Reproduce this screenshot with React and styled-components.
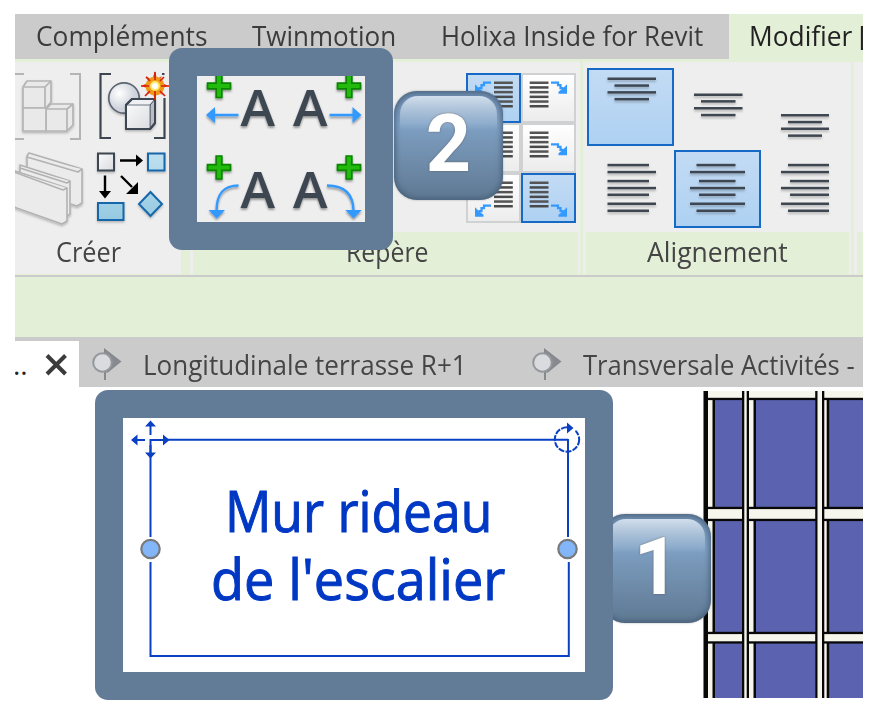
import React, { useLayoutEffect, useRef, useState } from 'react';
import styled, { createGlobalStyle, css } from 'styled-components';

const GlobalStyle = createGlobalStyle`
  * { box-sizing: border-box; }
  body { margin: 0; background: #fff; font-family: 'Open Sans', 'Noto Sans', sans-serif; }
  svg { display: block; }
`;

const slate = '#627b97';
const green = '#e4efd7';
const gray = '#cbcbcb';
const panel = '#eee';
const ink = '#3e4651';
const blue = '#0a40c4';
const sky = '#3399ff';

const Page = styled.div`
  width: 884px; height: 716px; padding: 14px 21px 18px 15px;
  position: relative; overflow: hidden; background: #fff;
`;
const Window = styled.div`
  width: 848px; height: 684px; overflow: hidden; display: flex; flex-direction: column;
`;
const TabBar = styled.nav`
  display: flex; height: 46px; flex: none; background: ${gray}; border-bottom: 1px solid ${green};
`;
const Tab = styled.div`
  flex: none; height: 46px; padding-left: ${p => p.$lead}px;
  line-height: 42px; font-size: 28px; color: ${p => (p.$active ? '#222' : '#3c3c3c')};
  display: flex; overflow: hidden; white-space: pre;
  ${p => p.$active && css`background: ${green}; flex: 1; margin-left: 25.5px;`}
`;
const Fit = styled.span`
  display: block; flex: none; width: ${p => p.$w}px; white-space: pre;
`;
const FitInner = styled.span`
  display: inline-block; transform-origin: 0 50%;
`;
const Ribbon = styled.div`
  display: flex; flex: none; height: 217px; background: ${green}; padding-top: 1.5px;
  border-bottom: 2px solid ${gray};
`;
const Panel = styled.section`
  flex: none; width: ${p => p.$w}px; margin-right: ${p => p.$gap}px; height: 212px;
  display: flex; flex-direction: column; background: ${panel};
`;
const PanelBody = styled.div`
  height: 170.5px; flex: none; display: flex; padding: ${p => p.$pad || '0'};
`;
const PanelLabel = styled.div`
  height: 41.5px; margin: 0 2.5px; padding-left: ${p => p.$lead}px;
  line-height: 39px; font-size: 28px; color: #454545;
  background: ${p => (p.$plain ? panel : green)};
`;
const OptionsBar = styled.div`
  height: 60px; flex: none; background: ${green};
`;
const DocTabs = styled.div`
  height: 50px; flex: none; display: flex; padding-top: 4px; background: ${gray};
  line-height: 46px; font-size: 28px; color: #454545;
`;
const OpenDoc = styled.div`
  width: 64px; flex: none; background: #fff; display: flex; overflow: hidden;
`;
const Dots = styled.span`
  width: 29px; margin-left: -2px; flex: none; color: #222;
`;
const DocTab = styled.div`
  display: flex; flex: none; width: ${p => p.$w}px; padding-left: ${p => p.$lead}px;
`;
const DocIcon = styled.svg`
  width: 51px; height: 46px; flex: none;
`;
const Canvas = styled.main`
  flex: 1; display: flex; justify-content: flex-end; background: #fff; padding-top: 4px;
`;
const ListGrid = styled.div`
  display: grid; grid-template-columns: 55px 55px; grid-template-rows: repeat(3, 50px);
`;
const ListButton = styled.div`
  border: 2px solid ${p => (p.$on ? '#1769c6' : '#d0d1d3')};
  background: ${p => (p.$on ? 'linear-gradient(#c3dbf4, #aed1f2)' : 'linear-gradient(#fff, #ececec)')};
  svg { margin: -2px; }
`;
const AlignGrid = styled.div`
  display: grid; grid-template-columns: repeat(3, 87px); grid-template-rows: 78px 78px; row-gap: 4px;
`;
const AlignButton = styled.div`
  border: 2px solid ${p => (p.$on ? '#1769c6' : 'transparent')};
  background: ${p => (p.$on ? 'linear-gradient(#c3dbf4, #aed1f2)' : 'none')};
  svg { margin: -2px; filter: drop-shadow(0 2px 1px rgba(0, 0, 0, 0.22)); }
`;
const Highlight = styled.div`
  position: absolute; left: ${p => p.$x}px; top: ${p => p.$y}px;
  width: ${p => p.$w}px; height: ${p => p.$h}px; padding: 28px;
  border-radius: 13px; background: ${slate};
`;
const HighlightView = styled.div`
  position: relative; height: 100%; background: ${p => p.$bg}; overflow: hidden;
`;
const Badge = styled.div`
  position: absolute; left: ${p => p.$x}px; top: ${p => p.$y}px; width: 109px; height: 109px;
  border-radius: 23px; overflow: hidden;
  background: linear-gradient(#6d8cae 0%, #7fa1c6 30%, #7897b8 45%, #5e7892 100%);
  box-shadow: inset 0 0 5px 2px rgba(65, 88, 114, 0.75), 0 0 2px rgba(80, 80, 80, 0.5);
  display: flex; justify-content: center;
  color: #fff; font: 700 79px/106px Roboto, 'Liberation Sans', sans-serif;
  text-shadow: 0 0 2px rgba(80, 70, 60, 0.7);
  &::before {
    content: ''; position: absolute; left: 6px; right: 6px; top: 5px; height: 34px;
    border-radius: 18px 18px 0 0;
    background: linear-gradient(rgba(220, 232, 243, 0.9), rgba(127, 161, 198, 0));
  }
`;
const Digit = styled.span`
  position: relative;
`;
const TagText = styled.div`
  position: absolute; inset: 58px 0 0 0; color: #0038c4; font-size: 56px; line-height: 68px;
  -webkit-text-stroke: 1px #0038c4;
`;
const TagLine = styled.div`
  padding-left: ${p => p.$lead}px;
`;

function FitText({ width, children }) {
  const ref = useRef(null);
  const [scale, setScale] = useState(1);
  useLayoutEffect(() => {
    setScale(width / ref.current.offsetWidth);
  }, [width]);
  return (
    <Fit $w={width}>
      <FitInner ref={ref} style={{ transform: `scaleX(${scale})` }}>{children}</FitInner>
    </Fit>
  );
}

function CreateIcons() {
  return (
    <svg width="154" height="170" viewBox="15 62 154 170" fill="none">
      <defs>
        <linearGradient id="pale" x1="0" y1="0" x2="1" y2="1"><stop stopColor="#fafafa" /><stop offset="1" stopColor="#d9dce0" /></linearGradient>
        <linearGradient id="aqua" x1="0" y1="0" x2="0" y2="1"><stop stopColor="#bfe0ee" /><stop offset="1" stopColor="#96cae2" /></linearGradient>
        <radialGradient id="ball" cx=".35" cy=".35"><stop stopColor="#fff" /><stop offset="1" stopColor="#cfd4dc" /></radialGradient>
        <filter id="soft" x="-20%" y="-20%" width="140%" height="150%"><feDropShadow dx="0" dy="1.5" stdDeviation="1" floodOpacity=".25" /></filter>
      </defs>
      <g stroke="#b4b4b4" strokeWidth="1.7" fill="#e9e9e9">
        <path d="M15 74h9M70 74h10v65H70M15 139h9" fill="none" strokeWidth="2" />
        <g filter="url(#soft)" strokeLinejoin="round">
          <path d="M23 87l4-6h24v21l-5 6H23z" /><path d="M23 87h22v21M45 87l6-6" />
          <path d="M46 109l5-5h22v21l-6 6H46z" /><path d="M46 109h21v22M67 109l6-5" />
          <path d="M23 108h23v23H23z" />
        </g>
      </g>
      <path d="M111 74h-10.500v64h10.500M162 74h2.500M154 138h10.500V98" stroke={ink} strokeWidth="2.200" />
      <circle cx="124" cy="98" r="15.200" fill="url(#ball)" stroke="#5c6572" strokeWidth="1.700" filter="url(#soft)" />
      <g stroke={ink} strokeWidth="2" strokeLinejoin="round" filter="url(#soft)">
        <path d="M126 105l6-6h23v24l-5 6H126z" fill="#eef0f3" />
        <path d="M150 105l5-6v24l-5 6z" fill="#b9bec6" strokeWidth="1" />
        <path d="M126 105h24v24H126z" fill="url(#pale)" stroke="#707782" strokeWidth="1" />
        <path d="M126 105v24h24l5-6V99h-23z" fill="none" />
      </g>
      <path d="M155 71l2 8 5-3-3 5 9 5-9 3 3 6-5-4-2 9-3-9-6 4 4-6-9-3 9-4-4-6 6 4z" fill="#e34612" />
      <circle cx="155" cy="86" r="9.500" fill="#ef9b18" />
      <path d="M155 72v8M155 91v9M141 86h8M161 86h8M146 77l4 4M160 91l5 5M164 77l-4 4M150 91l-5 5" stroke="#d71e08" strokeWidth="1.700" />
      <circle cx="155" cy="86" r="5" fill="#ffe76c" /><circle cx="155" cy="86" r="3" fill="#fff" />
      <g stroke="#b2b2b2" strokeWidth="1.600" fill="#ebebeb" strokeLinejoin="round" filter="url(#soft)">
        <path d="M29 153l53 16v34l-5 3-50-16v-34z" /><path d="M27 157l51 15 4-3" />
        <path d="M20 165l50 16v33l-4 3-46-16z" /><path d="M20 168l47 15 3-2" />
        <path d="M11 170l4 1 52 17v33l-5 3-51-18z" /><path d="M11 171l52 19 4-2" />
      </g>
      <g filter="url(#soft)">
        <path d="M98 153.500h16v17H98z" fill="url(#pale)" stroke={ink} strokeWidth="2" />
        <path d="M148 153.500h16.500v17H148zM98 203h25.500v17H98zM150.500 192l11.500 12-11.500 12-11.500-12z" fill="url(#aqua)" stroke="#1766aa" strokeWidth="2" />
      </g>
      <path d="M120 160.500h18M105 175.500v18M121 176l11 11" stroke="#000" strokeWidth="2.400" />
      <path d="M136 154.500l7 6-7 6zM99 191h12l-6 7.500zM138 182v12h-12z" fill="#000" />
    </svg>
  );
}

function ListIcon({ mirrored, level }) {
  const y = [9.7, 21.3, 32.7][level];
  const x = mirrored ? 28 : 8.7;
  return (
    <svg width="55" height="50">
      {[0, 1, 2, 3, 4, 5].map(i => <rect key={i} x={x} y={8.5 + i * 4.7} width="18.800" height="2.500" fill={i % 2 ? '#4a4a4a' : '#555'} />)}
      <g transform={mirrored ? `translate(55 ${y}) scale(-1 1)` : `translate(0 ${y})`}>
        <path d="M30 0h7v2.500h2.500v3h3" fill="none" stroke={sky} strokeWidth="2.200" />
        <path d="M46 1.500v9.500h-8.500v-2l4.500-3.500z" fill={sky} />
      </g>
    </svg>
  );
}

function AlignIcon({ bars }) {
  return (
    <svg width="87" height="78">
      {bars.map(([y, from, to]) => <rect key={y} x={from} y={y - 1.2} width={to - from} height="2.500" fill={ink} />)}
    </svg>
  );
}

const rowCenters = [15, 22, 31, 38, 44.7, 53.7, 60.7];
const aligns = [
  { on: true, bars: [[10.7, 20.5, 69], [17.5, 27.5, 62], [24.3, 20.5, 69], [31.1, 27.5, 62]] },
  { bars: [[26.7, 20, 68.5], [33.3, 27, 61.5], [40.2, 20, 68.5], [47, 27, 61.5]] },
  { bars: [[47.2, 20, 68], [54, 27, 61], [60.7, 20, 68], [67.6, 27, 61]] },
  { bars: rowCenters.map((y, i) => [y, 20.5, i % 2 ? 69 : 62]) },
  { on: true, bars: rowCenters.map((y, i) => [y, i % 2 ? 16 : i === 0 || i === 6 ? 22.5 : 25, i % 2 ? 71 : 61.5]) },
  { bars: rowCenters.map((y, i) => [y, i % 2 ? 20 : i === 0 || i === 6 ? 27 : 29, 68]) },
];

function SectionMark() {
  return (
    <DocIcon viewBox="0 0 51 46">
      <path d="M12 7l17.500 13.500-13.500 11h-4z" fill="#868a8f" />
      <path d="M13 30v9" stroke="#868a8f" strokeWidth="2" />
      <circle cx="10.500" cy="21.500" r="9.300" fill="#d9dbde" stroke="#94979b" strokeWidth="2" />
    </DocIcon>
  );
}

function CurtainWall() {
  const panes = [[715, 27], [755.5, 60], [829, 40]];
  const rows = [[399, 108], [520.5, 112], [643, 60]];
  return (
    <svg width="160" height="307" viewBox="703 391 160 307">
      <rect x="703" y="391" width="160" height="307" fill="#f6f6ed" />
      {panes.map(([x, w]) => rows.map(([y, h]) => (
        <rect key={`${x}-${y}`} x={x} y={y} width={w} height={h} fill="#5b63b1" />
      )))}
      <g fill="#080808">
        {rows.map(([y, h]) => [713.3, 754.3, 827.5].map(x => <rect key={`${x}-${y}`} x={x - 0.8} y={y} width="2.500" height={h} />))}
        {[399, 508, 520, 633, 642.5].map(y => [[706, 37.5], [747.5, 69], [823, 40]].map(([x, w]) => <rect key={`${x}-${y}`} x={x} y={y - 1.2} width={w} height="2.300" />))}
        {[742, 746.7, 815.2, 822].map(x => <rect key={x} x={x} y="391" width="2.300" height="307" />)}
        <rect x="703.500" y="391" width="4.500" height="307" />
      </g>
    </svg>
  );
}

const Plus = ({ x, y }) => (
  <path transform={`translate(${x} ${y})`} d="M-2.800-11.500h5.600v8.700h8.700v5.600h-8.700v8.700h-5.600v-8.700h-8.700v-5.600h8.700z" fill="#22bb08" stroke="#098400" strokeWidth="1.700" />
);

function LeaderIcons() {
  return (
    <svg width="168" height="146" viewBox="197 76 168 146">
      <defs><filter id="drop" x="-10%" y="-10%" width="120%" height="125%"><feDropShadow dx="0" dy="1.800" stdDeviation="1.200" floodOpacity=".4" /></filter></defs>
      <g filter="url(#drop)">
        <g fill={ink} fontFamily="'Open Sans', sans-serif" fontWeight="600" fontSize="51.500">
          {[[240.5, 126], [293, 126], [240.5, 208.3], [293, 208.3]].map(([x, y]) => (
            <text key={`${x}-${y}`} x={x} y={y} textLength="34.500" lengthAdjust="spacingAndGlyphs">A</text>
          ))}
        </g>
        <g stroke={sky} strokeWidth="2.300" fill="none">
          <path d="M213 115h25.500M329.500 115h25M238.500 185.500c-15 0-22 8-22 26M327 185.500c18 0 26.500 9 26.500 26" />
        </g>
        <path d="M206 115l9-8v16zM361.500 115l-9-8v16zM208.500 210h16.500l-8.300 8.500zM345.300 210h16.500l-8.300 8.500z" fill={sky} />
        <Plus x={219} y={86} /><Plus x={349} y={86} /><Plus x={219} y={167.5} /><Plus x={349} y={167.5} />
      </g>
    </svg>
  );
}

function TagFrame() {
  return (
    <svg width="462" height="254" viewBox="123 418 462 254" fill="none">
      <path d="M164 439.800H568M150.500 439V537M150.500 562V656H568.800V562M568 439V537" stroke={blue} strokeWidth="2" />
      <path d="M150.500 424v11M150.500 445v10M135 440h10M150 440h17" stroke={blue} strokeWidth="2" />
      <path d="M150.500 420.500l5.500 6h-11zM150.500 458.500l5.500-6h-11zM131 440l6.500-5.500v11zM169.500 440l-6.500-5.500v11z" fill={blue} />
      <circle cx="567" cy="439.500" r="12.200" stroke={blue} strokeWidth="2" strokeDasharray="6 1.300" />
      <path d="M567 424h11l-3 8h-8z" fill="#fff" />
      <path d="M567 422.500v11l6.500-5.500z" fill={blue} />
      {[150.5, 567.5].map(x => <circle key={x} cx={x} cy="549" r="9.200" fill="#82b6f8" stroke="#78797d" strokeWidth="2.200" />)}
    </svg>
  );
}

export default function App() {
  return (
    <Page>
      <GlobalStyle />
      <Window>
        <TabBar>
          <Tab $lead={21}><FitText width={171}>Compléments</FitText></Tab>
          <Tab $lead={45}><FitText width={144}>Twinmotion</FitText></Tab>
          <Tab $lead={44.5}><FitText width={262.5}>Holixa Inside for Revit</FitText></Tab>
          <Tab $active $lead={20}><FitText width={103.5}>Modifier</FitText><FitText width={15}> [</FitText></Tab>
        </TabBar>
        <Ribbon>
          <Panel $w={166} $gap={9}>
            <PanelBody><CreateIcons /></PanelBody>
            <PanelLabel $plain $lead={38}><FitText width={65}>Créer</FitText></PanelLabel>
          </Panel>
          <Panel $w={390} $gap={3}>
            <PanelBody $pad="11.500px 0 0 276px">
              <ListGrid>
                {[0, 1, 2].map(level => [true, false].map(mirrored => (
                  <ListButton key={`${level}-${mirrored}`} $on={mirrored ? level === 0 : level === 2}>
                    <ListIcon mirrored={mirrored} level={level} />
                  </ListButton>
                )))}
              </ListGrid>
            </PanelBody>
            <PanelLabel $lead={153}><FitText width={82.5}>Repère</FitText></PanelLabel>
          </Panel>
          <Panel $w={268} $gap={3}>
            <PanelBody $pad="6.500px 0 0 4px">
              <AlignGrid>
                {aligns.map(({ on, bars }, i) => <AlignButton key={i} $on={on}><AlignIcon bars={bars} /></AlignButton>)}
              </AlignGrid>
            </PanelBody>
            <PanelLabel $lead={61}><FitText width={141}>Alignement</FitText></PanelLabel>
          </Panel>
          <Panel $w={20} $gap={0}><PanelBody /><PanelLabel $lead={0} /></Panel>
        </Ribbon>
        <OptionsBar />
        <DocTabs>
          <OpenDoc>
            <Dots>..</Dots>
            <svg width="30" height="46"><path d="M5 14.500l18.500 18.500M23.500 14.500L5 33" stroke="#3b3b3b" strokeWidth="4" /></svg>
          </OpenDoc>
          <DocTab $lead={13} $w={440.5}><SectionMark /><FitText width={323.5}>Longitudinale terrasse R+1</FitText></DocTab>
          <DocTab $lead={12.5} $w={350}><SectionMark /><FitText width={272}>Transversale Activités -</FitText></DocTab>
        </DocTabs>
        <Canvas><CurtainWall /></Canvas>
      </Window>
      <Badge $x={394} $y={91}><Digit>2</Digit></Badge>
      <Badge $x={602} $y={514}><Digit>1</Digit></Badge>
      <Highlight $x={169} $y={48} $w={224} $h={202}>
        <HighlightView $bg={panel}><LeaderIcons /></HighlightView>
      </Highlight>
      <Highlight $x={95} $y={390} $w={518} $h={310}>
        <HighlightView $bg="#fff">
          <TagFrame />
          <TagText>
            <TagLine $lead={102}><FitText width={267}>Mur rideau</FitText></TagLine>
            <TagLine $lead={88}><FitText width={294}>de l'escalier</FitText></TagLine>
          </TagText>
        </HighlightView>
      </Highlight>
    </Page>
  );
}
